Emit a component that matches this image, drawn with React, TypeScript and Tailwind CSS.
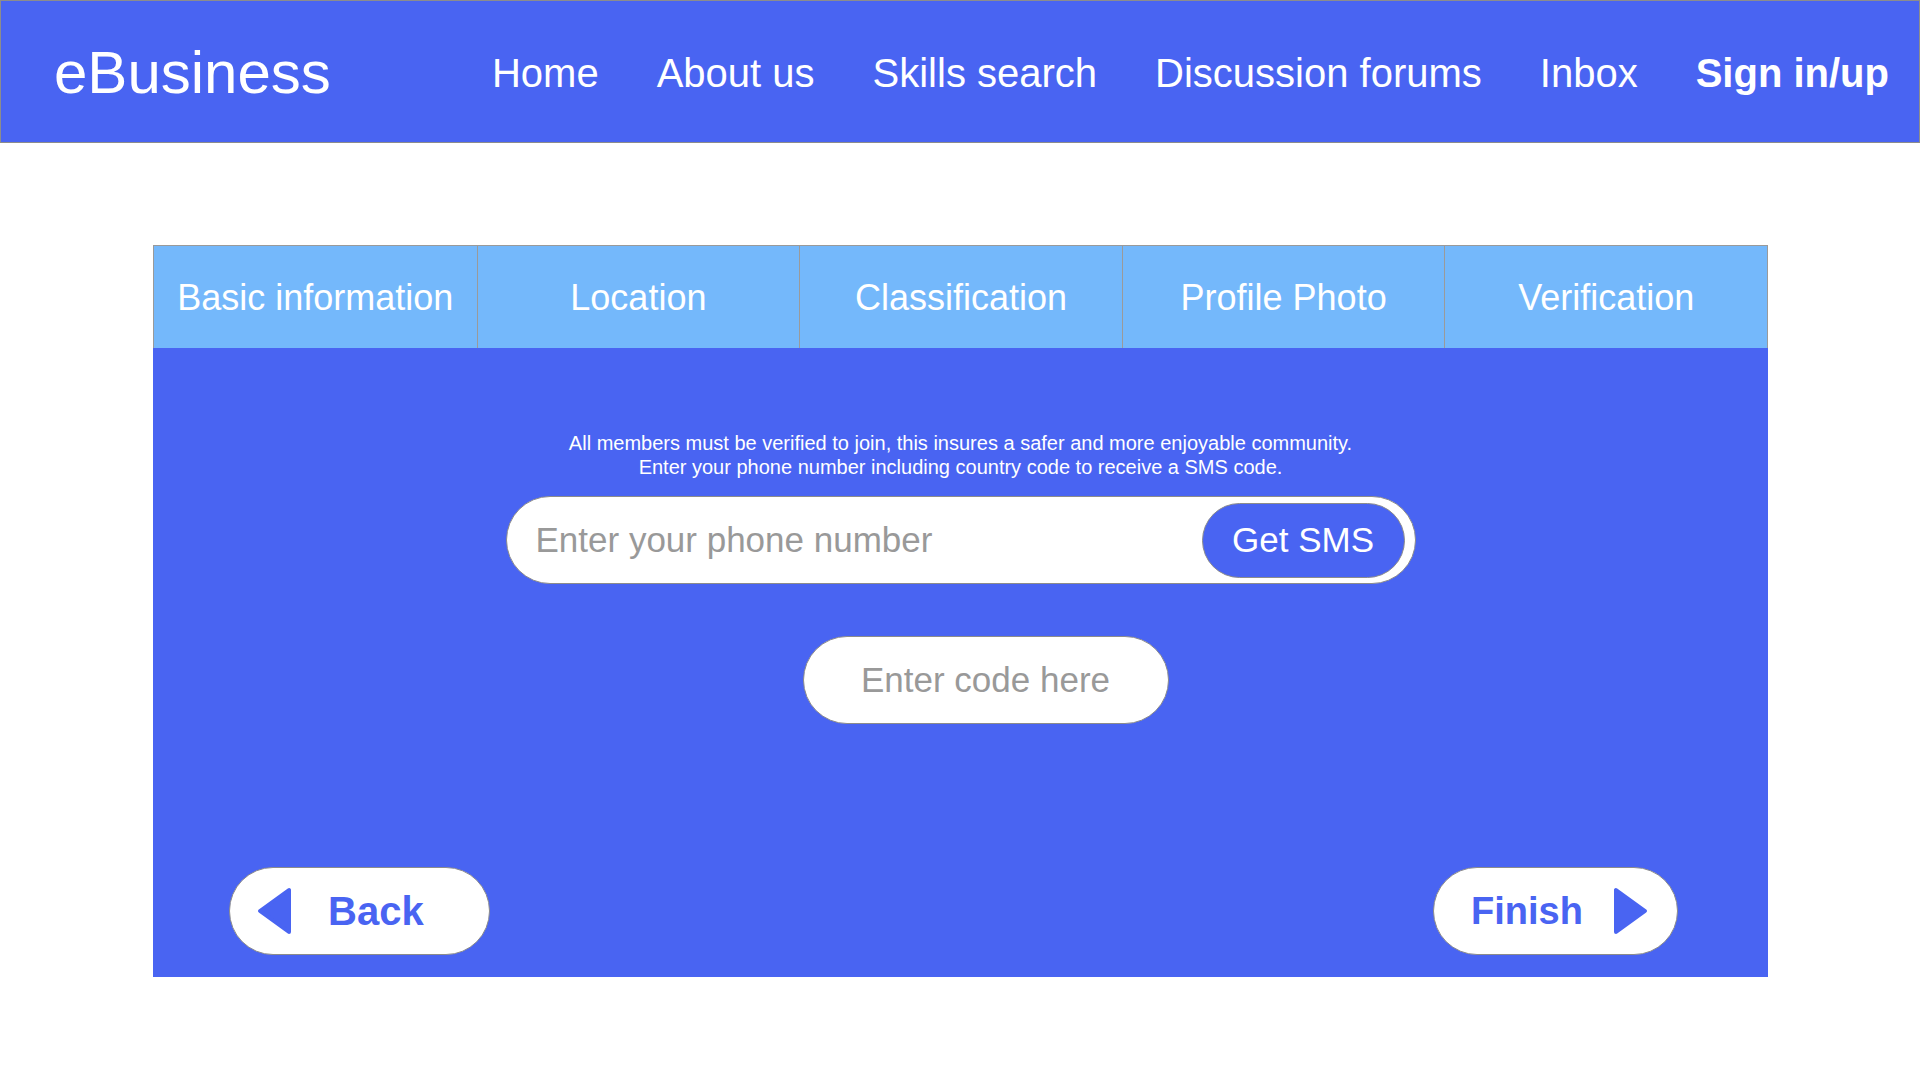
import React from "react";

const TABS = ["Basic information", "Location", "Classification", "Profile Photo", "Verification"];
const NAV = ["Home", "About us", "Skills search", "Discussion forums", "Inbox"];

function Triangle({ dir }: { dir: "left" | "right" }) {
  const pts = dir === "left" ? "32,3 32,45 3,24" : "3,3 3,45 32,24";
  return (
    <svg width="35" height="48" viewBox="0 0 35 48" className="shrink-0">
      <polygon
        points={pts}
        fill="#4964F2"
        stroke="#4964F2"
        strokeWidth="4"
        strokeLinejoin="round"
      />
    </svg>
  );
}

export default function App() {
  return (
    <div className="min-h-[1080px] w-[1920px] bg-white font-['Liberation_Sans',Arial,sans-serif]">
      {/* Header */}
      <header className="h-[143px] flex items-center justify-between bg-[#4964F2] border border-[#8c8c8c] pl-[53px] pr-[30px] pt-[2px] text-white">
        <div className="text-[60px] leading-none">eBusiness</div>
        <nav className="flex items-center gap-[58px] text-[40px] leading-none">
          {NAV.map((n) => (
            <span key={n}>{n}</span>
          ))}
          <span className="font-bold">Sign in/up</span>
        </nav>
      </header>

      {/* Wizard */}
      <section className="mt-[102px] ml-[153px] w-[1615px]">
        <div className="grid grid-cols-5 h-[103px] bg-[#74B8FB] border border-b-0 border-[#9a9a9a]">
          {TABS.map((t, i) => (
            <div
              key={t}
              className={[
                "flex items-center justify-center pt-[2px] text-white text-[36px] whitespace-nowrap",
                i > 0 ? "border-l border-[#9a9a9a]" : "",
              ].join(" ")}
            >
              {t}
            </div>
          ))}
        </div>

        <div className="h-[629px] bg-[#4964F2] flex flex-col items-center pt-[83px] pb-[22px]">
          <p className="text-white text-[20px] leading-[24px] text-center">
            All members must be verified to join, this insures a safer and more enjoyable community.
            <br />
            Enter your phone number including country code to receive a SMS code.
          </p>

          <div className="mt-[17px] w-[910px] h-[88px] bg-white rounded-full border border-[#8c8c8c] flex items-center justify-between pl-[29px] pr-[10px]">
            <span className="text-[35px] text-[#999999]">Enter your phone number</span>
            <button className="h-[75px] w-[203px] rounded-full bg-[#4964F2] border border-[#8c8c8c] text-white text-[35px]">
              Get SMS
            </button>
          </div>

          <div className="mt-[52px] ml-[50px] w-[366px] h-[88px] bg-white rounded-full border border-[#8c8c8c] flex items-center justify-center">
            <span className="text-[35px] text-[#999999]">Enter code here</span>
          </div>

          <div className="mt-auto w-full flex items-center justify-between pl-[76px] pr-[90px]">
            <button className="w-[261px] h-[88px] bg-white rounded-full border border-[#8c8c8c] flex items-center pl-[27px] gap-[36px] text-[#4964F2] text-[40px] font-bold">
              <Triangle dir="left" />
              <span>Back</span>
            </button>
            <button className="w-[245px] h-[88px] bg-white rounded-full border border-[#8c8c8c] flex items-center pl-[37px] gap-[30px] text-[#4964F2] text-[38px] font-bold">
              <span>Finish</span>
              <Triangle dir="right" />
            </button>
          </div>
        </div>
      </section>
    </div>
  );
}
